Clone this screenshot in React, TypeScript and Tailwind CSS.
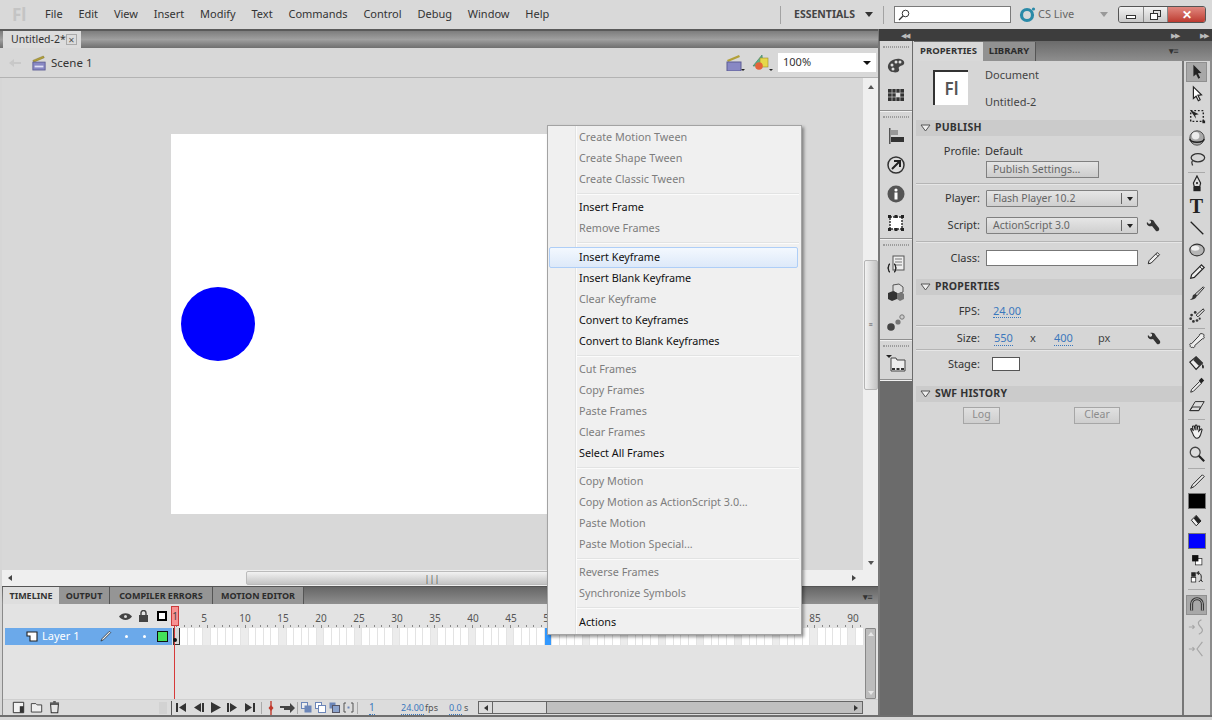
import type { ReactNode } from 'react'

const menuNames = ['File', 'Edit', 'View', 'Insert', 'Modify', 'Text', 'Commands', 'Control', 'Debug', 'Window', 'Help']

type MenuRow = { label: string; on?: boolean; hover?: boolean }

// groups of the frame context menu, gap = height of the separator that follows
const menuGroups: { rows: MenuRow[]; gap: string }[] = [
  { rows: [{ label: 'Create Motion Tween' }, { label: 'Create Shape Tween' }, { label: 'Create Classic Tween' }], gap: 'h-[7px]' },
  { rows: [{ label: 'Insert Frame', on: true }, { label: 'Remove Frames' }], gap: 'h-[8px]' },
  {
    rows: [
      { label: 'Insert Keyframe', on: true, hover: true },
      { label: 'Insert Blank Keyframe', on: true },
      { label: 'Clear Keyframe' },
      { label: 'Convert to Keyframes', on: true },
      { label: 'Convert to Blank Keyframes', on: true },
    ],
    gap: 'h-[7px]',
  },
  {
    rows: [{ label: 'Cut Frames' }, { label: 'Copy Frames' }, { label: 'Paste Frames' }, { label: 'Clear Frames' }, { label: 'Select All Frames', on: true }],
    gap: 'h-[7px]',
  },
  {
    rows: [{ label: 'Copy Motion' }, { label: 'Copy Motion as ActionScript 3.0...' }, { label: 'Paste Motion' }, { label: 'Paste Motion Special...' }],
    gap: 'h-[7px]',
  },
  { rows: [{ label: 'Reverse Frames' }, { label: 'Synchronize Symbols' }], gap: 'h-[8px]' },
  { rows: [{ label: 'Actions', on: true }], gap: 'h-0' },
]

function Ico({ children, size = 18 }: { children: ReactNode; size?: number }) {
  return (
    <svg width={size} height={size} viewBox="0 0 20 20" className="shrink-0">
      {children}
    </svg>
  )
}

// tool strip
const tools: Record<string, ReactNode> = {
  arrow: <path d="M6 2l9 9-4 .5 2.5 5-2 1-2.5-5L6 15z" fill="#222" />,
  sub: <path d="M6 2l9 9-4 .5 2.5 5-2 1-2.5-5L6 15z" fill="#fff" stroke="#222" strokeWidth="1.3" />,
  free: (
    <g>
      <rect x="3" y="4" width="14" height="12" fill="none" stroke="#222" strokeWidth="1.6" strokeDasharray="2 2" />
      <path d="M2 3l10 5-4 1 1 4z" fill="#222" />
      <rect x="16" y="15" width="3" height="3" fill="#222" />
    </g>
  ),
  rotate: (
    <g>
      <circle cx="10" cy="10" r="8" fill="#a8a8a8" stroke="#444" />
      <circle cx="8.500" cy="7.500" r="4.200" fill="#ececec" />
      <path d="M2 11c1 5 15 5 16 0" fill="none" stroke="#222" strokeWidth="1.600" />
    </g>
  ),
  lasso: (
    <g fill="none" stroke="#333" strokeWidth="1.400">
      <ellipse cx="11" cy="7.500" rx="7.500" ry="4.500" />
      <path d="M5 11c-2 2 0 3 0 5" />
    </g>
  ),
  pen: (
    <g>
      <path d="M10 1l4 8-1 4H7L6 9z" fill="#ddd" stroke="#222" strokeWidth="1.300" />
      <rect x="6" y="13" width="8" height="5" fill="#222" />
      <circle cx="10" cy="9" r="1.200" fill="#222" />
    </g>
  ),
  line: <path d="M3 3l14 14" stroke="#222" strokeWidth="1.400" />,
  oval: (
    <g>
      <ellipse cx="10" cy="10" rx="8" ry="6.500" fill="#b5b5b5" stroke="#333" strokeWidth="1.200" />
      <ellipse cx="8" cy="8" rx="4.500" ry="2.800" fill="#f0f0f0" />
    </g>
  ),
  pencil: (
    <g>
      <path d="M15 2l3 3L7 16l-4 1 1-4z" fill="#eee" stroke="#222" strokeWidth="1.300" />
      <path d="M13 4l3 3" stroke="#222" />
    </g>
  ),
  brush: (
    <g>
      <path d="M17 2l1 1-8 9-2-2z" fill="#ccc" stroke="#222" />
      <path d="M8 10l2 2c-1 3-4 5-8 4 2-1 3-1 3-3 0-2 2-3 3-3z" fill="#333" />
    </g>
  ),
  deco: (
    <g>
      <path d="M17 2l1 2-7 7-2-2z" fill="#ddd" stroke="#222" />
      <g fill="#333">
        <circle cx="4" cy="9" r="1.500" />
        <circle cx="8" cy="6" r="1.500" />
        <circle cx="3" cy="13" r="1.500" />
        <circle cx="6" cy="16" r="1.500" />
        <circle cx="10" cy="15" r="1.500" />
        <circle cx="13" cy="13" r="1.200" />
      </g>
    </g>
  ),
  bone: <path d="M16 2c2 0 2 2 1.500 3 1 1 .5 3-1.500 2.500L7.500 15c.5 2-1.500 3-2.500 2-1 .500-3 0-2.500-2-1-.5-.5-3 1.500-2L12.500 4C12 3 14 1 16 2z" fill="#eee" stroke="#333" strokeWidth="1.100" />,
  bucket: (
    <g>
      <path d="M2 9l7-6 7 7-7 7z" fill="#eee" stroke="#222" strokeWidth="1.300" />
      <path d="M9 3l7 7-4 3-6-6z" fill="#333" />
      <path d="M16 11c2 2 2 4 1 5s-2-2-1-5z" fill="#222" />
    </g>
  ),
  dropper: (
    <g>
      <path d="M13 6l2 2-9 9-3 1 1-3z" fill="#eee" stroke="#222" />
      <path d="M12 5l3-3 3 3-3 3z" fill="#222" />
    </g>
  ),
  eraser: <path d="M8 4h10l-6 10H2zM5 10h9l-2 4H2z" fill="#ddd" stroke="#333" strokeWidth="1.100" />,
  hand: <path d="M5 11L3 7c0-1 1-1 2 0l1 2-1-5c0-1 2-1 2 0l1 4V3c0-1 2-1 2 0v5l1-4c.500-1 2-.5 2 0l-1 5 2-2c1-1 2 0 1.500 1L14 13c-1 3-2 4-4 4-3 0-4-3-5-6z" fill="#f2f2f2" stroke="#222" strokeWidth="1.200" />,
  zoom: (
    <g>
      <circle cx="8" cy="8" r="5.500" fill="#ddd" stroke="#444" strokeWidth="1.400" />
      <path d="M12 12l6 6" stroke="#222" strokeWidth="2.400" />
    </g>
  ),
  smallPencil: <path d="M16 2l2 2L7 15l-4 2 2-4z" fill="#eee" stroke="#222" strokeWidth="1.100" />,
  smallBucket: (
    <g>
      <path d="M3 9l6-6 6 7-6 6z" fill="#eee" stroke="#222" strokeWidth="1.200" />
      <path d="M9 3l6 7-4 3-5-6z" fill="#222" />
    </g>
  ),
  blackWhite: (
    <g>
      <rect x="8" y="8" width="9" height="9" fill="#fff" stroke="#222" />
      <rect x="3" y="3" width="9" height="9" fill="#111" />
    </g>
  ),
  swap: (
    <g>
      <rect x="3" y="3" width="6" height="6" fill="#222" />
      <rect x="3" y="10" width="6" height="6" fill="#fff" stroke="#222" />
      <path d="M12 4c4 0 5 4 4 9M13 16l3-3 2 3M10 4l3-2v4z" fill="none" stroke="#222" strokeWidth="1.300" />
    </g>
  ),
  magnet: (
    <g fill="none" stroke="#333">
      <path d="M4 16V9a6 6 0 0 1 12 0v7" strokeWidth="3.400" />
      <path d="M4 16V9a6 6 0 0 1 12 0v7" stroke="#bbb" strokeWidth="1" />
    </g>
  ),
  smooth: <path d="M1 10h6m-2-2l2 2-2 2M15 2c-5 2-4 5-1 8s3 6-2 8" fill="none" stroke="#a6a6a6" strokeWidth="1.300" />,
  straighten: <path d="M1 10h6m-2-2l2 2-2 2M16 2l-6 8 6 8" fill="none" stroke="#a6a6a6" strokeWidth="1.300" />,
}

function ToolRow({ name, boxed }: { name: string; boxed?: boolean }) {
  return (
    <div className="flex h-[22px] items-center justify-center">
      <div className={`flex h-[20px] w-[21px] items-center justify-center ${boxed ? 'bg-[#a8a8a8] border border-[#8f8f8f]' : ''}`}>
        <Ico>{tools[name]}</Ico>
      </div>
    </div>
  )
}

function ToolSep({ className = 'h-[3px]' }: { className?: string }) {
  return (
    <div className={`flex items-center px-[4px] ${className}`}>
      <div className="h-px w-full bg-[#aaaaaa]" />
    </div>
  )
}

function ToolStrip() {
  return (
    <div className="flex w-[30px] shrink-0 flex-col bg-[#d6d6d6]">
      <div className="h-[20px] shrink-0 bg-gradient-to-b from-[#6b6b6b] to-[#8e8e8e]" />
      <div className="flex min-h-0 flex-1 flex-col border-x-2 border-x-[#777] border-r-[#8c8c8c] pr-[1px]">
        {['arrow', 'sub', 'free', 'rotate', 'lasso'].map((n) => (
          <ToolRow key={n} name={n} boxed={n === 'arrow'} />
        ))}
        <ToolSep className="h-[2px]" />
        <ToolRow name="pen" />
        <div className="flex h-[22px] items-center justify-center font-['Liberation_Serif',serif] text-[20px] font-bold leading-none text-[#222]">T</div>
        {['line', 'oval', 'pencil', 'brush', 'deco'].map((n) => (
          <ToolRow key={n} name={n} />
        ))}
        <ToolSep />
        {['bone', 'bucket', 'dropper', 'eraser'].map((n) => (
          <ToolRow key={n} name={n} />
        ))}
        <ToolSep />
        <ToolRow name="hand" />
        <ToolRow name="zoom" />
        <ToolSep className="h-[6px]" />
        <ToolRow name="smallPencil" />
        <div className="mx-auto h-[16px] w-[18px] border border-[#777] bg-black" />
        <div className="flex h-[24px] items-center justify-center">
          <Ico size={16}>{tools.smallBucket}</Ico>
        </div>
        <div className="mx-auto h-[16px] w-[18px] border border-[#777] bg-[#0000ff]" />
        <div className="mt-[2px] flex h-[18px] items-center justify-center">
          <Ico size={14}>{tools.blackWhite}</Ico>
        </div>
        <div className="flex h-[17px] items-center justify-center">
          <Ico size={15}>{tools.swap}</Ico>
        </div>
        <ToolSep className="h-[7px]" />
        <div className="mt-[1px]">
          <ToolRow name="magnet" boxed />
        </div>
        <ToolRow name="smooth" />
        <ToolRow name="straighten" />
      </div>
    </div>
  )
}

// dock of collapsed panels
const dock: Record<string, ReactNode> = {
  palette: (
    <g>
      <path d="M2 12C1 6 8 2 14 3c5 1 5 5 3 6-3 1-5 2-4 4 1 3-3 4-6 3-3 0-4-2-5-4z" fill="#444" />
      <circle cx="6" cy="9" r="1.500" fill="#ddd" />
      <circle cx="10" cy="6" r="1.500" fill="#ddd" />
      <circle cx="14" cy="6" r="1.500" fill="#ddd" />
      <circle cx="7" cy="13" r="1.500" fill="#ddd" />
    </g>
  ),
  swatches: (
    <g>
      <rect x="2" y="4" width="16" height="12" fill="#333" />
      <path d="M2 8h16M2 12h16M6 4v12M10 4v12M14 4v12" stroke="#ccc" strokeWidth="0.700" />
      <rect x="10" y="8" width="4" height="4" fill="#ddd" />
    </g>
  ),
  align: (
    <g>
      <rect x="3" y="2" width="1.500" height="16" fill="#555" />
      <rect x="5" y="4" width="7" height="5" fill="#999" />
      <rect x="5" y="11" width="13" height="5" fill="#333" />
    </g>
  ),
  transform: (
    <g>
      <circle cx="10" cy="10" r="8" fill="#ddd" stroke="#333" strokeWidth="1.500" />
      <path d="M6 14l7-7M8 6h6v6" fill="none" stroke="#222" strokeWidth="2" />
    </g>
  ),
  info: (
    <g>
      <circle cx="10" cy="10" r="8.500" fill="#555" />
      <rect x="8.500" y="8.500" width="3" height="7" fill="#fff" />
      <circle cx="10" cy="6" r="1.600" fill="#fff" />
    </g>
  ),
  square: (
    <g>
      <rect x="4" y="4" width="12" height="12" fill="#fff" stroke="#333" strokeWidth="1.500" strokeDasharray="2 1" />
      <g fill="#222">
        <rect x="2" y="2" width="3" height="3" />
        <rect x="15" y="2" width="3" height="3" />
        <rect x="2" y="15" width="3" height="3" />
        <rect x="15" y="15" width="3" height="3" />
        <rect x="8.500" y="2" width="3" height="3" />
        <rect x="8.500" y="15" width="3" height="3" />
      </g>
    </g>
  ),
  code: (
    <g>
      <rect x="7" y="2" width="11" height="14" fill="#eee" stroke="#555" />
      <path d="M9 5h7M9 8h7M9 11h7" stroke="#777" />
      <path d="M4 10c-2 0-1 3-2 4 1 1 0 4 2 4M8 10c2 0 1 3 2 4-1 1 0 4-2 4" fill="none" stroke="#222" strokeWidth="1.300" />
    </g>
  ),
  cubes: (
    <g>
      <path d="M7 2l6-1 4 3v5l-5 2-5-3z" fill="#ddd" stroke="#555" />
      <path d="M2 10l5-2 4 2v6l-5 2-4-2z" fill="#333" />
      <path d="M11 11l4-2 3 2v5l-4 2-3-2z" fill="#777" />
    </g>
  ),
  dots: (
    <g>
      <circle cx="5" cy="15" r="3.800" fill="#444" />
      <circle cx="12" cy="10" r="2.600" fill="#777" />
      <circle cx="16" cy="5" r="2.200" fill="#ccc" stroke="#777" />
    </g>
  ),
  folder: (
    <g>
      <path d="M5 5h5l1 2h8v11H5z" fill="#eee" stroke="#444" />
      <path d="M0 2h6L3 5z" fill="#222" />
      <path d="M6 15h3v2H6zM10.500 15h3v2h-3zM15 15h3v2h-3z" fill="#333" />
    </g>
  ),
}

function DockGroup({ names, gap }: { names: string[]; gap: string }) {
  return (
    <div className="border-b border-[#8f8f8f] shadow-[0_1px_0_#f0f0f0]">
      <div className="mx-[3px] mt-[5px] h-[2px] border-y border-dotted border-[#9d9d9d]" />
      <div className={`flex flex-col items-center ${gap}`}>
        {names.map((n) => (
          <Ico key={n} size={20}>
            {dock[n]}
          </Ico>
        ))}
      </div>
    </div>
  )
}

function Label({ children, className = '' }: { children: ReactNode; className?: string }) {
  return <span className={`w-[66px] shrink-0 text-right text-[#333] ${className}`}>{children}</span>
}

function Wrench() {
  return (
    <svg width="14" height="14" viewBox="0 0 14 14">
      <path d="M1 3l2 2 2-1 0-2-2-1c3-1 5 0 6 3l4 5c1 2-1 4-3 3L6 7C3 8 0 6 1 3z" fill="#333" />
    </svg>
  )
}

function SectionHead({ title }: { title: string }) {
  return (
    <div className="ml-[2px] flex h-[16px] items-center gap-[4px] bg-[#cbcbcb] pl-[4px] text-[10.500px] font-bold tracking-[0.2px] text-[#333]">
      <svg width="11" height="8" viewBox="0 0 11 8">
        <path d="M1 1h9L5.500 7z" fill="#eee" stroke="#555" />
      </svg>
      {title}
    </div>
  )
}

function Divider() {
  return <div className="ml-[2px] h-[2px] border-t border-[#b5b5b5] bg-[#e6e6e6]" />
}

function Combo({ text }: { text: string }) {
  return (
    <div className="flex h-[17px] w-[152px] items-center justify-between rounded-[1px] border border-[#808080] bg-gradient-to-b from-[#e6e6e6] to-[#cfcfcf] pl-[6px] text-[10.500px] text-[#666]">
      {text}
      <span className="flex h-[11px] w-[16px] items-center justify-center border-l border-[#666]">
        <span className="h-0 w-0 border-x-[3.500px] border-t-[4px] border-x-transparent border-t-[#222]" />
      </span>
    </div>
  )
}

function Hot({ children }: { children: ReactNode }) {
  return <span className="border-b border-dotted border-[#3b78bd] leading-[12px] text-[#3b78bd]">{children}</span>
}

function PropertiesPanel() {
  return (
    <div className="flex min-w-0 flex-1 flex-col bg-[#d6d6d6] text-[11px]">
      <div className="flex h-[20px] items-end bg-gradient-to-b from-[#6b6b6b] to-[#8e8e8e] text-[9.500px] font-bold">
        <div className="flex h-[19px] w-[69px] items-center justify-center bg-[#d8d8d8] text-[#333]">PROPERTIES</div>
        <div className="flex h-[19px] w-[53px] items-center justify-center border-r border-[#555] bg-[#919191] text-[#2b2b2b]">LIBRARY</div>
        <span className="ml-auto mb-[6px] mr-[4px] text-[9px] leading-none tracking-tighter text-[#333]">▾≡</span>
      </div>
      <div className="flex h-[59px] items-start pl-[19px] pt-[7px]">
        <div className="mt-[2px] flex h-[35px] w-[35px] items-center justify-center border-l-2 border-t-2 border-[#333] bg-white text-[17px] font-semibold text-[#555]">Fl</div>
        <div className="ml-[17px] flex h-[41px] flex-col justify-between text-[#444]">
          <span className="leading-[14px]">Document</span>
          <span className="leading-[14px]">Untitled-2</span>
        </div>
      </div>
      <SectionHead title="PUBLISH" />
      <div className="mt-[7px] flex h-[16px] items-center gap-[5px]">
        <Label>Profile:</Label>
        <span className="text-[#333]">Default</span>
      </div>
      <div className="ml-[72px] mt-[2px] flex h-[17px] w-[113px] items-center border border-[#808080] bg-gradient-to-b from-[#e4e4e4] to-[#cdcdcd] pl-[6px] text-[10.500px] text-[#666]">Publish Settings...</div>
      <div className="mt-[5px]">
        <Divider />
      </div>
      <div className="mt-[5px] flex items-center gap-[6px]">
        <Label>Player:</Label>
        <Combo text="Flash Player 10.2" />
      </div>
      <div className="mt-[10px] flex items-center gap-[6px]">
        <Label>Script:</Label>
        <Combo text="ActionScript 3.0" />
        <span className="ml-[2px]">
          <Wrench />
        </span>
      </div>
      <div className="mt-[7px]">
        <Divider />
      </div>
      <div className="mt-[7px] flex items-center gap-[6px]">
        <Label>Class:</Label>
        <div className="h-[16px] w-[152px] border border-[#777] bg-white" />
        <span className="ml-[2px]">
          <Ico size={15}>{tools.pencil}</Ico>
        </span>
      </div>
      <div className="mt-[12px]">
        <SectionHead title="PROPERTIES" />
      </div>
      <div className="mt-[9px] flex h-[16px] items-center gap-[13px]">
        <Label>FPS:</Label>
        <Hot>24.00</Hot>
      </div>
      <div className="mt-[5px]">
        <Divider />
      </div>
      <div className="mt-[4px] flex h-[16px] items-center">
        <Label>Size:</Label>
        <span className="ml-[14px] w-[36px]">
          <Hot>550</Hot>
        </span>
        <span className="w-[24px] text-[#444]">x</span>
        <span className="w-[44px]">
          <Hot>400</Hot>
        </span>
        <span className="w-[12px] text-[#444]">px</span>
        <span className="ml-[37px]">
          <Wrench />
        </span>
      </div>
      <div className="mt-[2px]">
        <Divider />
      </div>
      <div className="mt-[6px] flex h-[15px] items-center gap-[12px]">
        <Label>Stage:</Label>
        <div className="h-[14px] w-[28px] border border-[#555] bg-white" />
      </div>
      <div className="mt-[14px]">
        <SectionHead title="SWF HISTORY" />
      </div>
      <div className="mt-[5px] flex text-[10.500px] text-[#8c8c8c]">
        <div className="ml-[49px] flex h-[17px] w-[37px] items-center justify-center border border-[#a6a6a6] bg-gradient-to-b from-[#e0e0e0] to-[#cecece]">Log</div>
        <div className="ml-[74px] flex h-[17px] w-[46px] items-center justify-center border border-[#a6a6a6] bg-gradient-to-b from-[#e0e0e0] to-[#cecece]">Clear</div>
      </div>
    </div>
  )
}

function RightSide() {
  return (
    <div className="flex w-[333px] shrink-0 flex-col">
      <div className="flex h-[12px] shrink-0 items-center justify-between bg-[#3d3d3d] px-[4px] text-[7px] leading-none tracking-[-1px] text-[#bbb]">
        <span className="ml-[18px]">◀◀</span>
        <span className="ml-auto mr-[21px]">▶▶</span>
        <span>▶▶</span>
      </div>
      <div className="flex min-h-0 flex-1">
        <div className="flex w-[35px] shrink-0 flex-col border-x border-x-[#777] border-r-[#d6d6d6] bg-[#6b6b6b]">
          <div className="mr-[1px] bg-[#d6d6d6]">
            <DockGroup names={['palette', 'swatches']} gap="gap-[9px] pt-[8px] pb-[5px]" />
            <DockGroup names={['align', 'transform', 'info', 'square']} gap="gap-[9px] pt-[8px] pb-[5px]" />
            <DockGroup names={['code', 'cubes', 'dots']} gap="gap-[9px] pt-[8px] pb-[7px]" />
            <DockGroup names={['folder']} gap="pt-[6px] pb-[6px]" />
          </div>
        </div>
        <PropertiesPanel />
        <ToolStrip />
      </div>
    </div>
  )
}

function TopBar() {
  return (
    <div className="flex h-[29px] shrink-0 items-center bg-[#d9d9d9] pl-[12px] pr-[6px] text-[11px] text-[#333]">
      <span className="w-[33px] text-[17px] font-bold leading-none text-[#c4c4c4]">Fl</span>
      <div className="flex gap-[15.800px]">
        {menuNames.map((name) => (
          <span key={name}>{name}</span>
        ))}
      </div>
      <div className="ml-auto h-[18px] w-px bg-[#a3a3a3]" />
      <span className="ml-[13px] w-[64px] text-[10.500px] font-bold text-[#444]">ESSENTIALS</span>
      <span className="ml-[7px] h-0 w-0 border-x-[4px] border-t-[5px] border-x-transparent border-t-[#333]" />
      <div className="ml-[10px] h-[18px] w-px bg-[#a3a3a3]" />
      <div className="ml-[10px] flex h-[17px] w-[117px] items-center border border-[#7a7a7a] bg-white pl-[3px]">
        <svg width="12" height="12" viewBox="0 0 12 12">
          <circle cx="7.500" cy="4.500" r="3.300" fill="none" stroke="#333" />
          <path d="M5 7l-4 4" stroke="#333" strokeWidth="1.300" />
        </svg>
      </div>
      <svg width="17" height="17" viewBox="0 0 17 17" className="ml-[8px]">
        <circle cx="8" cy="9" r="5.500" fill="none" stroke="#2a8aa8" strokeWidth="3.200" />
        <circle cx="14.500" cy="3" r="1.600" fill="#2a8aa8" />
      </svg>
      <span className="ml-[2px] w-[38px] text-[#666]">CS Live</span>
      <span className="ml-[24px] h-0 w-0 border-x-[4px] border-t-[5px] border-x-transparent border-t-[#999]" />
      <div className="ml-[10px] flex h-[17px] w-[88px] overflow-hidden rounded-[3px] border border-[#555]">
        <div className="flex w-[25px] items-end justify-center border-r border-[#888] bg-gradient-to-b from-[#f2f2f2] to-[#c9c9c9] pb-[3px]">
          <span className="h-[4px] w-[10px] border border-[#333] bg-white" />
        </div>
        <div className="flex w-[24px] items-center justify-center border-r border-[#888] bg-gradient-to-b from-[#f2f2f2] to-[#c9c9c9]">
          <svg width="11" height="11" viewBox="0 0 11 11">
            <rect x="3.500" y="1.500" width="7" height="6" fill="none" stroke="#333" />
            <rect x="0.500" y="4.500" width="7" height="6" fill="#fff" stroke="#333" />
          </svg>
        </div>
        <div className="flex flex-1 items-center justify-center bg-gradient-to-b from-[#e0877f] to-[#bd3a30] text-[12px] font-bold leading-none text-white">✕</div>
      </div>
    </div>
  )
}

function DocTabs() {
  return (
    <div className="flex h-[19px] shrink-0 items-end border-t-2 border-[#5a5a5a] bg-gradient-to-b from-[#7d7d7d] via-[#a0a0a0] to-[#6f6f6f] pl-[3px]">
      <div className="flex h-[17px] w-[78px] items-center justify-between bg-[#dcdcdc] pl-[8px] pr-[4px] text-[10.500px] text-[#333]">
        Untitled-2*
        <span className="flex h-[11px] w-[11px] items-center justify-center border border-[#aaa] text-[8px] leading-none text-[#555]">✕</span>
      </div>
    </div>
  )
}

function SceneBar() {
  return (
    <div className="flex h-[30px] shrink-0 items-center border-b border-[#b3b3b3] bg-[#d8d8d8] pl-[9px] pr-[2px]">
      <svg width="13" height="10" viewBox="0 0 13 10">
        <path d="M0 5l5-4v3h7v2H5v3z" fill="#c8c8c8" />
      </svg>
      <svg width="14" height="16" viewBox="0 0 16 16" className="ml-[10px]">
        <path d="M1 5l12-5 1 2L2 7z" fill="#b3a13a" stroke="#776a1e" strokeWidth="0.500" />
        <rect x="1" y="7" width="14" height="9" fill="#8888c4" stroke="#5c5c94" />
        <rect x="3" y="11" width="10" height="2" fill="#dfe0f5" />
      </svg>
      <span className="ml-[5px] text-[11.500px] text-[#333]">Scene 1</span>
      <svg width="19" height="17" viewBox="0 0 19 17" className="ml-auto">
        <path d="M1 6l12-5 1 2L2 8z" fill="#b3a13a" />
        <rect x="1" y="8" width="14" height="9" fill="#8888c4" stroke="#5c5c94" />
        <path d="M15 15h4l-2 2z" fill="#222" />
      </svg>
      <svg width="22" height="19" viewBox="0 0 22 19" className="ml-[7px]">
        <path d="M1 13L10 2l1 11z" fill="#5cb08a" stroke="#3c8060" strokeWidth="0.600" />
        <rect x="8" y="5" width="8" height="9" fill="#e6d84a" stroke="#9b8d2a" strokeWidth="0.600" />
        <circle cx="7" cy="13" r="3.800" fill="#e4643a" />
        <path d="M17 16h4l-2 2z" fill="#222" />
      </svg>
      <div className="ml-[4px] flex h-[19px] w-[98px] items-center justify-between bg-white pl-[5px] pr-[5px] text-[11px] text-[#333]">
        100%
        <span className="h-0 w-0 border-x-[4px] border-t-[4px] border-x-transparent border-t-[#111]" />
      </div>
    </div>
  )
}

function StageArea() {
  return (
    <div className="flex min-h-0 flex-1">
      <div className="min-w-0 flex-1 bg-[#d8d8d8] pl-[169px] pt-[56px]">
        <div className="relative h-[380px] w-[550px] bg-white">
          <div className="absolute left-[10px] top-[153px] h-[74px] w-[74px] rounded-full bg-[#0000ff]" />
        </div>
      </div>
      <div className="flex w-[15px] shrink-0 flex-col items-center bg-[#efefef]">
        <span className="mt-[7px] h-0 w-0 border-x-[3.500px] border-b-[4px] border-x-transparent border-b-[#555]" />
        <div className="mt-[171px] flex h-[130px] w-[14px] items-center justify-center rounded-[2px] border border-[#b5b5b5] bg-gradient-to-r from-[#f2f2f2] to-[#c4c4c4] text-[7px] text-[#555]">≡</div>
        <span className="mt-auto mb-[5px] h-0 w-0 border-x-[3.500px] border-t-[4px] border-x-transparent border-t-[#555]" />
      </div>
    </div>
  )
}

function HScroll() {
  return (
    <div className="flex h-[16px] shrink-0 items-center bg-[#efefef] pl-[6px] pr-[22px]">
      <span className="h-0 w-0 border-y-[3.500px] border-r-[4px] border-y-transparent border-r-[#444]" />
      <div className="ml-[234px] flex h-[14px] w-[372px] items-center justify-center rounded-[2px] border border-[#bbb] bg-gradient-to-b from-[#f2f2f2] to-[#c4c4c4] text-[9px] leading-none text-[#555]">|||</div>
      <span className="ml-auto h-0 w-0 border-y-[3.500px] border-l-[4px] border-y-transparent border-l-[#444]" />
    </div>
  )
}

function TimelineTabs() {
  return (
    <div className="flex h-[18px] shrink-0 items-end border-t border-[#555] bg-gradient-to-b from-[#666] to-[#8f8f8f] pl-[1px] text-[9px] font-bold">
      <div className="flex h-[17px] w-[56px] items-center justify-center bg-[#dedede] text-[#333]">TIMELINE</div>
      <div className="flex h-[17px] w-[51px] items-center justify-center border-r border-[#555] bg-[#959595] text-[#2c2c2c]">OUTPUT</div>
      <div className="flex h-[17px] w-[103px] items-center justify-center border-r border-[#555] bg-[#959595] text-[#2c2c2c]">COMPILER ERRORS</div>
      <div className="flex h-[17px] w-[91px] items-center justify-center border-r border-[#555] bg-[#959595] text-[#2c2c2c]">MOTION EDITOR</div>
      <span className="mb-[3px] ml-auto mr-[6px] text-[9px] leading-none tracking-tighter text-[#333]">▾≡</span>
    </div>
  )
}

const rulerLabels = [10, 15, 20, 25, 30, 35, 40, 45, 50, 55, 60, 65, 70, 75, 80, 85, 90]
const frames = Array.from({ length: 91 }, (_, i) => i)

function TransportButton({ d }: { d: string }) {
  return (
    <svg width="13" height="11" viewBox="0 0 13 11" className="shrink-0">
      <path d={d} fill="#333" />
    </svg>
  )
}

function Timeline() {
  return (
    <div className="relative flex h-[111px] shrink-0 flex-col border-l border-[#8a8a8a] bg-[#e3e3e3] text-[#333]">
      <div className="flex h-[24px] shrink-0">
        <div className="flex w-[170px] shrink-0 items-center justify-end gap-[6px] pr-[6px]">
          <svg width="13" height="9" viewBox="0 0 13 9">
            <path d="M0 4.500C3 0 10 0 13 4.500 10 9 3 9 0 4.500z" fill="#444" />
            <circle cx="6.500" cy="4.500" r="1.500" fill="#ddd" />
          </svg>
          <svg width="11" height="12" viewBox="0 0 11 12">
            <rect x="1" y="5" width="9" height="7" fill="#444" />
            <path d="M3 5V3a2.500 2.500 0 0 1 5 0v2" fill="none" stroke="#444" strokeWidth="1.400" />
          </svg>
          <div className="ml-[2px] h-[10px] w-[10px] border-2 border-black bg-white" />
        </div>
        <div className="flex min-w-0 flex-1 flex-col">
          <div className="flex h-[21px] items-end text-[10px] leading-[14px] text-[#555]">
            <span className="w-[9px]" />
            <span className="w-[44px] text-center">5</span>
            {rulerLabels.map((n) => (
              <span key={n} className="w-[38px] shrink-0 text-center">
                {n}
              </span>
            ))}
          </div>
          <div className="flex h-[3px]">
            {frames.map((i) => (
              <span key={i} className="flex w-[7.600px] shrink-0 justify-center">
                <span className={`block w-px bg-[#888] ${(i + 1) % 5 === 0 ? 'h-[3px]' : 'h-[2px]'}`} />
              </span>
            ))}
          </div>
        </div>
      </div>
      <div className="flex h-[17px] shrink-0">
        <div className="ml-[2px] flex w-[167px] shrink-0 items-center bg-[#6ba9ea] pl-[21px] text-[11px] text-white">
          <svg width="12" height="11" viewBox="0 0 12 11">
            <path d="M1 1h10v9H4V5H1z" fill="#fff" stroke="#222" strokeWidth="1.100" />
          </svg>
          <span className="ml-[4px] w-[36px]">Layer 1</span>
          <div className="ml-[21px] flex items-center">
            <Ico size={13}>{tools.smallPencil}</Ico>
          </div>
          <span className="ml-[13px] h-[3px] w-[3px] rounded-full bg-white" />
          <span className="ml-[15px] h-[3px] w-[3px] rounded-full bg-white" />
          <div className="ml-[11px] h-[11px] w-[11px] border border-[#111] bg-[#44e25a]" />
        </div>
        <div className="flex min-w-0 flex-1 pl-[0.600px]">
          <div className="h-full w-[7.600px] shrink-0 border border-[#333] border-t-0 bg-[#d8d8d8]" />
          {frames.slice(1).map((i) => (
            <div key={i} className={`h-full w-[7.600px] shrink-0 border-r border-[#e3e3e3] ${i === 49 ? 'bg-[#3399ff]' : (i + 1) % 5 === 0 ? 'bg-[#ececec]' : 'bg-white'}`} />
          ))}
        </div>
      </div>
      <div className="min-h-0 flex-1" />
      <div className="flex h-[16px] shrink-0 items-center border-t border-[#cfcfcf] bg-[#dcdcdc] pl-[9px] text-[10px]">
        <Ico size={13}>
          <path d="M2 2h16v16H2z" fill="#f2f2f2" stroke="#333" strokeWidth="1.500" />
          <path d="M12 8h6v10h-6z" fill="#333" />
        </Ico>
        <div className="ml-[5px]">
          <Ico size={13}>
            <path d="M2 4h7l2 2h7v11H2z" fill="#eee" stroke="#444" strokeWidth="1.500" />
          </Ico>
        </div>
        <div className="ml-[5px]">
          <Ico size={13}>
            <path d="M4 5h12l-1 13H5zM3 3h14M8 1h4" fill="#e8e8e8" stroke="#333" strokeWidth="1.600" />
          </Ico>
        </div>
        <div className="ml-[98px] h-[12px] w-[8px] bg-[#d2d2d2]" />
        <div className="ml-[4px] h-[14px] w-px bg-[#555]" />
        <div className="ml-[3px] flex gap-[4px]">
          <TransportButton d="M1 1h2v9H1zM11 1v9L4 5.500z" />
          <TransportButton d="M10 1h2v9h-2zM9 1v9L2 5.500z" />
          <TransportButton d="M2 0l10 5.500L2 11z" />
          <TransportButton d="M1 1h2v9H1zM4 1v9l7-4.500z" />
          <TransportButton d="M10 1h2v9h-2zM2 1v9l7-4.500z" />
        </div>
        <div className="ml-[5px] h-[12px] w-px bg-[#aaa]" />
        <svg width="10" height="14" viewBox="0 0 10 14" className="ml-[4px]">
          <path d="M5 0v14" stroke="#c0392b" strokeWidth="1.400" />
          <path d="M5 4l2.500 3L5 10 2.500 7z" fill="#c0392b" />
        </svg>
        <svg width="16" height="10" viewBox="0 0 16 10" className="ml-[3px]">
          <path d="M1 3h10V0l5 5-5 5V7H5V5H1z" fill="#444" />
        </svg>
        <div className="ml-[2px] h-[12px] w-px bg-[#aaa]" />
        <div className="ml-[3px] flex gap-[3px]">
          <svg width="11" height="11" viewBox="0 0 11 11">
            <rect x="0.500" y="0.500" width="6" height="6" fill="#eee" stroke="#6c86b8" />
            <rect x="3.500" y="3.500" width="7" height="7" fill="#6c86b8" />
          </svg>
          <svg width="11" height="11" viewBox="0 0 11 11">
            <rect x="0.500" y="0.500" width="6" height="6" fill="#fff" stroke="#6c86b8" />
            <rect x="3.500" y="3.500" width="7" height="7" fill="#fff" stroke="#6c86b8" />
          </svg>
          <svg width="11" height="11" viewBox="0 0 11 11">
            <rect x="0.500" y="0.500" width="6" height="6" fill="#6c86b8" />
            <rect x="3.500" y="3.500" width="7" height="7" fill="#8ba2cc" stroke="#556" />
          </svg>
          <svg width="11" height="11" viewBox="0 0 11 11">
            <path d="M3 1H1v9h2M8 1h2v9H8" fill="none" stroke="#555" />
            <rect x="4.500" y="4.500" width="2" height="2" fill="#6c86b8" />
          </svg>
        </div>
        <div className="ml-[3px] h-[12px] w-px bg-[#aaa]" />
        <span className="ml-[11px] w-[32px]">
          <Hot>1</Hot>
        </span>
        <span className="w-[24px] text-[9px]">
          <Hot>24.00</Hot>
        </span>
        <span className="w-[24px] text-[9px] text-[#555]">fps</span>
        <span className="w-[15px] text-[9px]">
          <Hot>0.0</Hot>
        </span>
        <span className="w-[14px] text-[9px] text-[#555]">s</span>
        <div className="flex h-[13px] w-[385px] items-center border border-[#666] bg-[#c0c0c0]">
          <div className="flex h-full w-[14px] items-center justify-center border-r border-[#666] bg-[#dcdcdc]">
            <span className="h-0 w-0 border-y-[3px] border-r-[4px] border-y-transparent border-r-[#333]" />
          </div>
          <div className="h-full w-[54px] border-r border-[#666] bg-[#dcdcdc]" />
          <span className="ml-auto mr-[4px] h-0 w-0 border-y-[3px] border-l-[4px] border-y-transparent border-l-[#333]" />
        </div>
      </div>
      {/* vertical scroller of the layers */}
      <div className="absolute right-[2px] top-[24px] flex h-[71px] w-[11px] flex-col items-center justify-between rounded-[1px] border border-[#888] bg-[#bdbdbd] py-[3px]">
        <span className="h-0 w-0 border-x-[3px] border-b-[4px] border-x-transparent border-b-[#e6e6e6]" />
        <span className="h-0 w-0 border-x-[3px] border-t-[4px] border-x-transparent border-t-[#e6e6e6]" />
      </div>
      {/* playhead */}
      <div className="absolute left-[168px] top-[2px] flex h-[20px] w-[8px] items-center justify-center border border-[#cc3b3b] bg-[#f79292] text-[10px] leading-none text-[#444]">1</div>
      <div className="absolute bottom-[16px] left-[171px] top-[22px] w-px bg-[#d63a3a]" />
      <div className="absolute left-[170px] top-[34px] h-[4px] w-[4px] rounded-full bg-[#111]" />
    </div>
  )
}

function ContextMenu() {
  return (
    <div className="absolute left-[547px] top-[125px] w-[255px] border border-[#a3a3a3] bg-[#f0f0f0] py-[1px] shadow-[2px_2px_3px_rgba(0,0,0,0.4)]">
      <div className="absolute bottom-0 left-[27px] top-0 w-[2px] border-l border-[#e2e3e3] bg-white/70" />
      {menuGroups.map((group, g) => (
        <div key={g} className="relative">
          {group.rows.map((row) => (
            <div
              key={row.label}
              className={`ml-[1px] mr-[3px] flex h-[21px] items-center text-[10.800px] ${row.on ? 'text-[#111]' : 'text-[#7d7d7d]'} ${row.hover ? 'rounded-[2px] border border-[#aecef7] bg-gradient-to-b from-[#f3f8fe] to-[#dde9f9] pl-[29px]' : 'pl-[30px]'}`}
            >
              {row.label}
            </div>
          ))}
          {group.gap !== 'h-0' && (
            <div className={`flex items-center pl-[29px] pr-[2px] ${group.gap}`}>
              <div className="h-[2px] w-full border-t border-[#e2e3e3] bg-white/70" />
            </div>
          )}
        </div>
      ))}
    </div>
  )
}

export default function App() {
  return (
    <div className="relative flex h-[720px] w-[1212px] flex-col overflow-hidden whitespace-nowrap bg-[#d6d6d6] font-['Noto_Sans','Open_Sans',sans-serif]">
      <TopBar />
      <div className="flex min-h-0 flex-1 border-b-2 border-[#6e6e6e]">
        <div className="flex w-[879px] shrink-0 flex-col border-r border-[#777]">
          <DocTabs />
          <SceneBar />
          <div className="ml-[2px] flex min-h-0 flex-1 flex-col">
            <StageArea />
            <HScroll />
            <TimelineTabs />
            <Timeline />
          </div>
        </div>
        <RightSide />
      </div>
      <div className="h-[3px] shrink-0 bg-[#d6d6d6]" />
      <ContextMenu />
    </div>
  )
}
